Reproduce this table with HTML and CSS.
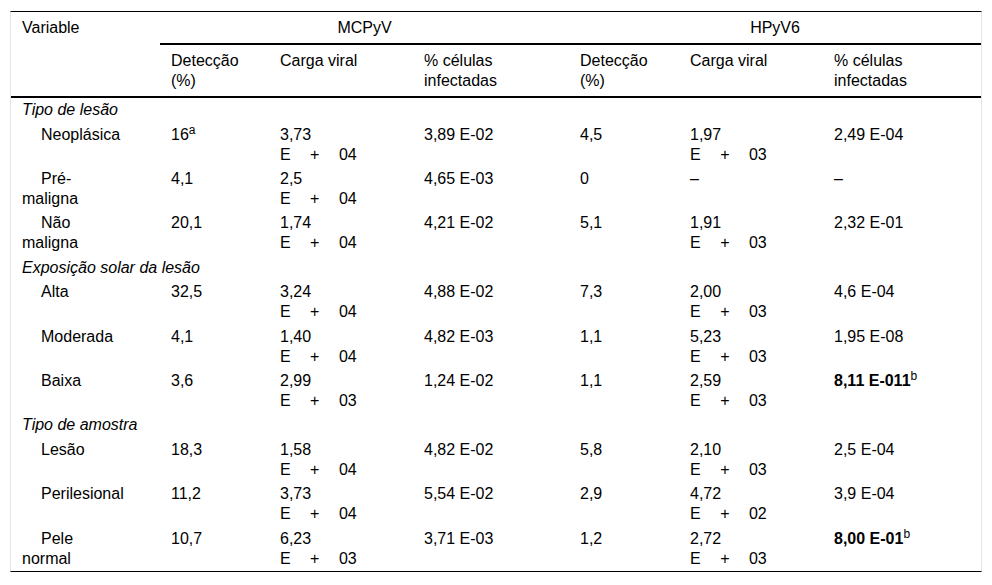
FILE: index.html
```html
<!DOCTYPE html>
<html lang="pt">
<head>
<meta charset="utf-8">
<title>Tabela</title>
<link rel="stylesheet" href="styles.css">
</head>
<body>
<div class="wrap">
<table class="tbl">
<colgroup>
<col class="c1"><col class="c2"><col class="c3"><col class="c4"><col class="c5"><col class="c6"><col class="c7">
</colgroup>
<thead>
<tr class="h1">
<th rowspan="2" class="var">Variable</th>
<th colspan="3" class="grp">MCPyV</th>
<th colspan="3" class="grp">HPyV6</th>
</tr>
<tr class="h2">
<th>Detecção (%)</th><th>Carga viral</th><th>% células infectadas</th>
<th>Detecção (%)</th><th>Carga viral</th><th>% células infectadas</th>
</tr>
</thead>
<tbody>
<tr class="sec"><td colspan="7">Tipo de lesão</td></tr>
<tr><td class="lbl">Neoplásica</td><td>16<sup>a</sup></td><td>3,73<br><span class="exp">E + 04</span></td><td>3,89 E-02</td><td>4,5</td><td>1,97<br><span class="exp">E + 03</span></td><td>2,49 E-04</td></tr>
<tr><td class="lbl">Pré-maligna</td><td>4,1</td><td>2,5<br><span class="exp">E + 04</span></td><td>4,65 E-03</td><td>0</td><td>–</td><td>–</td></tr>
<tr><td class="lbl">Não maligna</td><td>20,1</td><td>1,74<br><span class="exp">E + 04</span></td><td>4,21 E-02</td><td>5,1</td><td>1,91<br><span class="exp">E + 03</span></td><td>2,32 E-01</td></tr>
<tr class="sec"><td colspan="7">Exposição solar da lesão</td></tr>
<tr><td class="lbl">Alta</td><td>32,5</td><td>3,24<br><span class="exp">E + 04</span></td><td>4,88 E-02</td><td>7,3</td><td>2,00<br><span class="exp">E + 03</span></td><td>4,6 E-04</td></tr>
<tr><td class="lbl">Moderada</td><td>4,1</td><td>1,40<br><span class="exp">E + 04</span></td><td>4,82 E-03</td><td>1,1</td><td>5,23<br><span class="exp">E + 03</span></td><td>1,95 E-08</td></tr>
<tr><td class="lbl">Baixa</td><td>3,6</td><td>2,99<br><span class="exp">E + 03</span></td><td>1,24 E-02</td><td>1,1</td><td>2,59<br><span class="exp">E + 03</span></td><td><strong>8,11 E-011</strong><sup>b</sup></td></tr>
<tr class="sec"><td colspan="7">Tipo de amostra</td></tr>
<tr><td class="lbl">Lesão</td><td>18,3</td><td>1,58<br><span class="exp">E + 04</span></td><td>4,82 E-02</td><td>5,8</td><td>2,10<br><span class="exp">E + 03</span></td><td>2,5 E-04</td></tr>
<tr><td class="lbl">Perilesional</td><td>11,2</td><td>3,73<br><span class="exp">E + 04</span></td><td>5,54 E-02</td><td>2,9</td><td>4,72<br><span class="exp">E + 02</span></td><td>3,9 E-04</td></tr>
<tr><td class="lbl">Pele normal</td><td>10,7</td><td>6,23<br><span class="exp">E + 03</span></td><td>3,71 E-03</td><td>1,2</td><td>2,72<br><span class="exp">E + 03</span></td><td><strong>8,00 E-01</strong><sup>b</sup></td></tr>
</tbody>
</table>
</div>
</body>
</html>
```

FILE: styles.css
```css
html, body {
  margin: 0;
  padding: 0;
  background: #fff;
}

body {
  font-family: "Liberation Sans", Arial, sans-serif;
  font-size: 16px;
  line-height: 20px;
  color: #000;
}

.wrap {
  padding: 11px 0 0 10px;
}

.tbl {
  width: 972px;
  table-layout: fixed;
  border-collapse: separate;
  border-spacing: 0;
  border-top: 1px solid #000;
  border-bottom: 1px solid #000;
  border-left: 1px solid #e4e4e4;
  border-right: 1px solid #e4e4e4;
}

.c1 { width: 149px; }
.c2 { width: 109px; }
.c3 { width: 144px; }
.c4 { width: 156px; }
.c5 { width: 110px; }
.c6 { width: 144px; }
.c7 { width: 158px; }

.tbl th {
  font-weight: normal;
  text-align: left;
  vertical-align: top;
  padding: 6px 11px 5px 11px;
}

.tbl .h1 .grp {
  text-align: center;
  border-bottom: 2px solid #000;
}

.tbl .var {
  border-bottom: 2px solid #000;
}

.tbl .h2 th {
  border-bottom: 2px solid #000;
}

.tbl td {
  vertical-align: top;
  padding: 2px 11px 2.4px 11px;
}

.tbl .sec td {
  font-style: italic;
  padding: 2px 11px 2.5px 11px;
}

.tbl td.lbl {
  text-indent: 19px;
  padding-right: 35px;
}

.exp {
  word-spacing: 15px;
}

sup {
  font-size: 12px;
  line-height: 0;
  vertical-align: 6px;
}

strong {
  font-weight: bold;
}
```
